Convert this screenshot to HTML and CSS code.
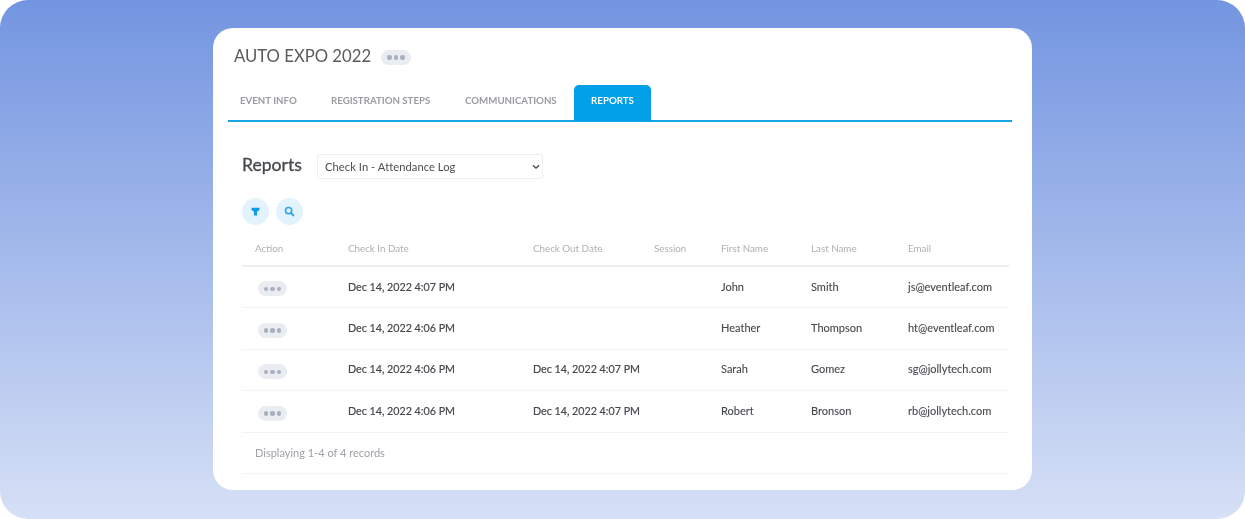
FILE: index.html
```html
<!DOCTYPE html>
<html lang="en">
<head>
    <meta charset="UTF-8">
    <meta name="viewport" content="width=device-width, initial-scale=1.0">
    <title>Auto Expo 2022 - Reports</title>
    <link rel="stylesheet" href="styles.css">
</head>
<body>
    <div id="wrap">
        <div id="card">
            <div class="title-row">
                <h1 class="event-title">AUTO EXPO 2022</h1>
                <span class="more more-title"><i></i><i></i><i></i></span>
            </div>
            <div class="tabs">
                <a class="tab tab-info">EVENT INFO</a>
                <a class="tab tab-steps">REGISTRATION STEPS</a>
                <a class="tab tab-comm">COMMUNICATIONS</a>
                <a class="tab tab-reports on">REPORTS</a>
            </div>
            <div class="panel">
                <div class="report-head">
                    <h2 class="report-title">Reports</h2>
                    <div class="report-select">
                        <span>Check In - Attendance Log</span>
                        <svg width="8" height="6" viewBox="0 0 8 6"><path d="M1 1.2l3 3 3-3" fill="none" stroke="#444" stroke-width="1.3"/></svg>
                    </div>
                </div>
                <div class="tools">
                    <span class="tool">
                        <svg width="9" height="9" viewBox="0 0 9 9"><path d="M.5.8h8v2.1L6 4.4v4H3v-4L.5 2.9z" fill="#0b9be3"/></svg>
                    </span>
                    <span class="tool">
                        <svg width="11" height="11" viewBox="0 0 11 11"><circle cx="4.6" cy="4.6" r="3.1" fill="none" stroke="#2aa6e6" stroke-width="1.6"/><path d="M7 7l3 3" stroke="#2aa6e6" stroke-width="1.8"/></svg>
                    </span>
                </div>
                <table class="records">
                    <colgroup>
                        <col class="c-action"><col class="c-in"><col class="c-out"><col class="c-session">
                        <col class="c-first"><col class="c-last"><col class="c-email">
                    </colgroup>
                    <thead>
                        <tr>
                            <th>Action</th><th>Check In Date</th><th>Check Out Date</th><th>Session</th>
                            <th>First Name</th><th>Last Name</th><th>Email</th>
                        </tr>
                    </thead>
                    <tbody>
                        <tr>
                            <td><span class="more"><i></i><i></i><i></i></span></td>
                            <td>Dec 14, 2022 4:07 PM</td><td></td><td></td>
                            <td>John</td><td>Smith</td><td>js@eventleaf.com</td>
                        </tr>
                        <tr>
                            <td><span class="more"><i></i><i></i><i></i></span></td>
                            <td>Dec 14, 2022 4:06 PM</td><td></td><td></td>
                            <td>Heather</td><td>Thompson</td><td>ht@eventleaf.com</td>
                        </tr>
                        <tr>
                            <td><span class="more"><i></i><i></i><i></i></span></td>
                            <td>Dec 14, 2022 4:06 PM</td><td>Dec 14, 2022 4:07 PM</td><td></td>
                            <td>Sarah</td><td>Gomez</td><td>sg@jollytech.com</td>
                        </tr>
                        <tr>
                            <td><span class="more"><i></i><i></i><i></i></span></td>
                            <td>Dec 14, 2022 4:06 PM</td><td>Dec 14, 2022 4:07 PM</td><td></td>
                            <td>Robert</td><td>Bronson</td><td>rb@jollytech.com</td>
                        </tr>
                    </tbody>
                </table>
                <div class="records-foot">Displaying 1-4 of 4 records</div>
            </div>
        </div>
    </div>
</body>
</html>
```

FILE: styles.css
```css
*{
    margin: 0;
    padding: 0;
    box-sizing: border-box;
}
html, body{
    width: 100%;
    height: 100%;
    background-color: #fff;
    overflow: hidden;
}
body{
    font-family: "Lato", "Open Sans", sans-serif;
}
#wrap{
    width: 100%;
    height: 519px;
    padding: 28px 213px 29px;
    border-radius: 28px;
    background: linear-gradient(180deg, #7395e0 0%, #d6e0f6 100%);
}
#card{
    height: 462px;
    padding: 0 20px 0 15px;
    background-color: #fff;
    border-radius: 20px;
    filter: blur(0.45px);
}
.title-row{
    display: flex;
    align-items: center;
    height: 57px;
    padding: 0 0 2px 6px;
}
.event-title{
    font-size: 16.7px;
    font-weight: 400;
    color: #5a5a5e;
}
.more{
    display: inline-flex;
    align-items: center;
    justify-content: center;
    gap: 2px;
    width: 29px;
    height: 15px;
    background-color: #e9edf2;
    border-radius: 8px;
}
.more i{
    width: 4.5px;
    height: 4.5px;
    background-color: #a9b0bd;
    border-radius: 50%;
}
.more-title{
    width: 30px;
    margin-left: 10px;
    margin-top: 4px;
}
.tabs{
    display: flex;
    height: 37px;
    border-bottom: 2px solid #1ba4e4;
}
.tab{
    height: 35px;
    padding-top: 9px;
    font-size: 9.7px;
    font-weight: 700;
    color: #9b9ba3;
    white-space: nowrap;
}
.tab-info{
    width: 103px;
    padding-left: 12px;
}
.tab-steps{
    width: 134px;
}
.tab-comm{
    width: 109px;
}
.tab-reports{
    width: 77px;
}
.tab.on{
    height: 36px;
    background-color: #02a0e8;
    color: #fff;
    text-align: center;
    border-radius: 5px 5px 0 0;
}
.panel{
    padding: 0 3px 0 14px;
}
.report-head{
    display: flex;
    align-items: center;
    height: 25px;
    margin-top: 32px;
}
.report-title{
    width: 75px;
    padding-bottom: 5px;
    font-size: 17.6px;
    font-weight: 400;
    color: #45484d;
    -webkit-text-stroke: 0.3px #45484d;
}
.report-select{
    display: flex;
    align-items: center;
    justify-content: space-between;
    width: 226px;
    height: 25px;
    padding: 0 2px 0 7px;
    font-size: 11.2px;
    letter-spacing: 0.05px;
    color: #4a4d52;
    border: 1px solid #eceef0;
    border-radius: 3px;
}
.tools{
    display: flex;
    gap: 7px;
    margin-top: 19px;
}
.tool{
    display: flex;
    align-items: center;
    justify-content: center;
    width: 27px;
    height: 27px;
    background-color: #e3f3fe;
    border-radius: 50%;
}
.records{
    width: 767px;
    margin-top: 8px;
    border-collapse: collapse;
    table-layout: fixed;
}
.c-action{ width: 93px; }
.c-in{ width: 185px; }
.c-out{ width: 121px; }
.c-session{ width: 67px; }
.c-first{ width: 90px; }
.c-last{ width: 97px; }
.c-email{ width: 114px; }
.records th{
    height: 33px;
    padding: 0 0 2px 13px;
    font-size: 9.8px;
    font-weight: 400;
    color: #aeb0b5;
    text-align: left;
    border-bottom: 2px solid #eceef0;
    white-space: nowrap;
}
.records td{
    height: 41.6px;
    padding: 0 0 2px 13px;
    font-size: 11px;
    color: #45484d;
    border-bottom: 1px solid #f2f3f5;
    white-space: nowrap;
    -webkit-text-stroke: 0.1px #45484d;
}
.records td:nth-child(2), .records td:nth-child(3){
    font-size: 10.7px;
    -webkit-text-stroke: 0.2px #45484d;
}
.records td:first-child{
    padding: 3px 0 0 13px;
}
.records td .more{
    margin-left: 3px;
    vertical-align: middle;
}
.records-foot{
    width: 767px;
    height: 41px;
    padding: 13px 0 0 13px;
    font-size: 11px;
    color: #a0a2a8;
    border-bottom: 1px solid #f2f3f5;
}
```
